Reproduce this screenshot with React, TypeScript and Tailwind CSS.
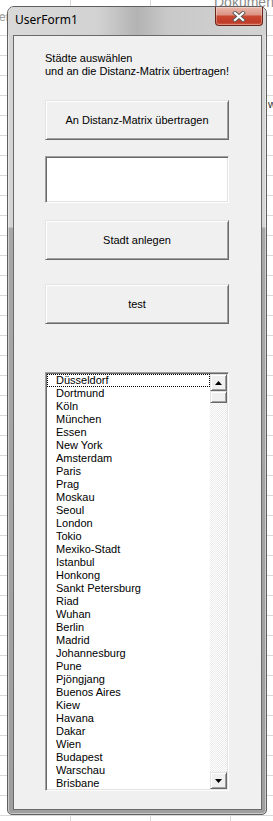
const cities = [
  "Düsseldorf",
  "Dortmund",
  "Köln",
  "München",
  "Essen",
  "New York",
  "Amsterdam",
  "Paris",
  "Prag",
  "Moskau",
  "Seoul",
  "London",
  "Tokio",
  "Mexiko-Stadt",
  "Istanbul",
  "Honkong",
  "Sankt Petersburg",
  "Riad",
  "Wuhan",
  "Berlin",
  "Madrid",
  "Johannesburg",
  "Pune",
  "Pjöngjang",
  "Buenos Aires",
  "Kiew",
  "Havana",
  "Dakar",
  "Wien",
  "Budapest",
  "Warschau",
  "Brisbane",
];

// classic raised 3D edge used by buttons and scrollbar parts
const raised =
  "border border-t-[#e3e3e3] border-l-[#e3e3e3] border-r-[#696969] border-b-[#696969] shadow-[inset_1px_1px_0_#ffffff,inset_-1px_-1px_0_#a0a0a0] bg-[#f0f0f0]";
const sunken =
  "border border-t-[#a0a0a0] border-l-[#a0a0a0] border-r-white border-b-white shadow-[inset_1px_1px_0_#696969,inset_-1px_-1px_0_#e3e3e3]";

function FormButton({ label }: { label: string }) {
  return (
    <div className={`flex h-[40px] w-[184px] shrink-0 items-center justify-center text-[11px] text-black ${raised}`}>
      {label}
    </div>
  );
}

function Arrow({ up }: { up?: boolean }) {
  return (
    <svg width="7" height="4" viewBox="0 0 7 4">
      <path d={up ? "M3.5 0 L7 4 L0 4 Z" : "M0 0 L7 0 L3.5 4 Z"} fill="#000" />
    </svg>
  );
}

function CloseButton() {
  return (
    <div className="flex h-[19px] w-[48px] items-center justify-center rounded-b-[4px] border border-t-0 border-[#6a2418] bg-[linear-gradient(to_bottom,#e9b8ac_0%,#dc9584_42%,#c9472f_52%,#c03a28_85%,#d2664d_100%)] shadow-[inset_0_0_0_1px_rgba(255,255,255,0.3)]">
      <svg width="14" height="11" viewBox="0 0 14 11">
        <path d="M3 2 L11 9 M11 2 L3 9" stroke="#5a5a5a" strokeWidth="4" strokeLinecap="square" />
        <path d="M3 2 L11 9 M11 2 L3 9" stroke="#ffffff" strokeWidth="2.2" strokeLinecap="square" />
      </svg>
    </div>
  );
}

export default function App() {
  return (
    <div className="relative h-[821px] w-[273px] overflow-hidden bg-white bg-[repeating-linear-gradient(to_bottom,transparent_0px,transparent_15px,#d9d9d9_15px,#d9d9d9_16px,transparent_16px,transparent_20px),repeating-linear-gradient(to_right,transparent_0px,transparent_70px,#d9d9d9_70px,#d9d9d9_71px,transparent_71px,transparent_80px)] pl-[7px] pt-[6px] font-['Liberation_Sans',Arial,sans-serif]">
      {/* spreadsheet content showing behind the glass frame */}
      <span className="absolute left-[214px] top-[-6px] text-[14px] leading-[16px] text-[#8c8c8c]">Dokument</span>
      <span className="absolute left-[-1px] top-[10px] text-[12px] leading-[14px] text-[#a0a0a0]">er</span>
      <span className="absolute left-[268px] top-[98px] text-[11px] leading-[13px] text-[#333]">w</span>

      <div className="relative flex h-[809px] w-[260px] flex-col rounded-t-[7px] rounded-b-[5px] border border-[#5f5f5f] bg-[linear-gradient(to_bottom,#d4d4d4_0px,#d4d4d4_220px,#a7a7a7_221px,#9e9e9e_100%)] shadow-[inset_0_0_0_1px_rgba(255,255,255,0.45)]">
        <div className="flex h-[28px] shrink-0 items-start justify-between rounded-t-[6px] bg-[linear-gradient(to_right,#d9d9d9_0%,#d2d2d2_35%,#b3b3b3_50%,#c9c9c9_62%,#d3d3d3_100%)] pl-[7px] pr-[3px]">
          <span className="pt-[5px] font-['Noto_Sans',sans-serif] text-[12px] leading-[16px] text-black">UserForm1</span>
          <CloseButton />
        </div>

        <div className="mb-[4px] ml-[5px] mr-[4px] flex flex-1 flex-col border border-[#6a6a6a] bg-[#f0f0f0] pl-[31px]">
          <p className="mt-[16px] text-[11px] leading-[13px] text-black">
            Städte auswählen
            <br />
            und an die Distanz-Matrix übertragen!
          </p>

          <div className="mt-[22px]">
            <FormButton label="An Distanz-Matrix übertragen" />
          </div>

          <div className={`mt-[16px] h-[47px] w-[184px] shrink-0 bg-white ${sunken}`} />

          <div className="mt-[17px]">
            <FormButton label="Stadt anlegen" />
          </div>

          <div className="mt-[24px]">
            <FormButton label="test" />
          </div>

          <div className={`mt-[48px] flex h-[419px] w-[184px] shrink-0 overflow-hidden bg-white ${sunken} p-[1px]`}>
            <ul className="flex-1 overflow-hidden text-[11px] leading-[13px] text-black">
              {cities.map((c, i) => (
                <li
                  key={c}
                  className={`h-[13px] whitespace-nowrap pl-[9px] ${i === 0 ? "outline-1 -outline-offset-1 outline-dotted outline-black" : ""}`}
                >
                  {c}
                </li>
              ))}
            </ul>
            <div className="flex w-[17px] shrink-0 flex-col">
              <div className={`flex h-[17px] shrink-0 items-center justify-center ${raised}`}>
                <Arrow up />
              </div>
              <div className={`h-[12px] shrink-0 ${raised}`} />
              <div className="flex-1 bg-[repeating-conic-gradient(#ffffff_0_25%,#ebebeb_0_50%)] bg-[length:2px_2px]" />
              <div className={`flex h-[17px] shrink-0 items-center justify-center ${raised}`}>
                <Arrow />
              </div>
            </div>
          </div>
        </div>
      </div>
    </div>
  );
}
